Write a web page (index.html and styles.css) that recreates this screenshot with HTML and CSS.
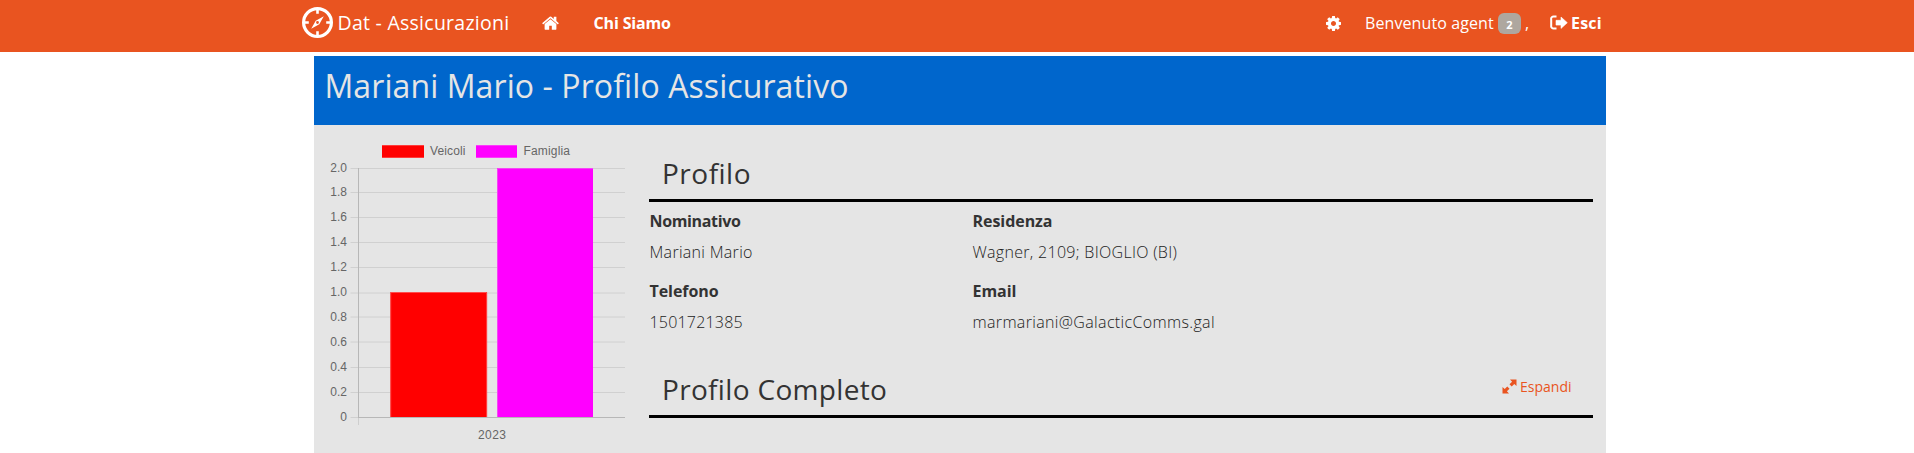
FILE: index.html
```html
<!DOCTYPE html>
<html lang="it">
<head>
<meta charset="utf-8">
<title>Dat - Assicurazioni</title>
<link rel="stylesheet" href="styles.css">
</head>
<body>
<nav class="navbar">
  <div class="nav-inner">
    <svg class="compass" viewBox="0 0 32 32" width="32" height="32">
      <circle cx="15.500" cy="15.500" r="13.900" fill="none" stroke="#fff" stroke-width="3.200"/>
      <path d="M15.500 2v4.800M15.500 24.200V29M2 15.500h4.800M24.200 15.500H29" stroke="#fff" stroke-width="2.600"/>
      <path fill="#fff" fill-rule="evenodd" d="M21.800 9.200 17.300 17.300 9.200 21.800 13.700 13.700ZM15.500 14.100a1.400 1.400 0 1 0 0 2.800 1.400 1.400 0 0 0 0-2.800Z"/>
    </svg>
    <span class="brand">Dat - Assicurazioni</span>
    <svg class="home" viewBox="0 0 1664 1312" width="17" height="14"><path fill="#fff" d="M1408 768v480q0 26-19 45t-45 19H960V928H704v384H320q-26 0-45-19t-19-45V768q0-1 .5-3t.5-3l575-474 575 474q1 2 1 6zm223-69-62 74q-8 9-21 11h-3q-13 0-21-7L832 200 140 777q-12 8-24 7-13-2-21-11l-62-74q-8-10-7-23.500t11-21.500L756 55q32-26 76-26t76 26l244 204V64q0-14 9-23t23-9h192q14 0 23 9t9 23v408l219 182q10 8 11 21.500t-7 23.500z"/></svg>
    <b class="about">Chi Siamo</b>
    <svg class="gear" viewBox="0 0 1536 1536" width="15" height="15"><path fill="#fff" d="M1024 768q0-106-75-181t-181-75-181 75-75 181 75 181 181 75 181-75 75-181zm512-109v222q0 12-8 23t-20 13l-185 28q-19 54-39 91 35 50 107 138 10 12 10 25t-9 23q-27 37-99 108t-94 71q-12 0-26-9l-138-108q-44 23-91 38-16 136-29 186-7 28-36 28H657q-14 0-24.500-8.500T621 1506l-28-184q-49-16-90-37l-141 107q-10 9-25 9-14 0-25-11-126-114-165-168-7-10-7-23 0-12 8-23 15-21 51-66.500t54-70.500q-27-50-41-99L29 913q-13-2-21-12.500T0 877V655q0-12 8-23t19-13l186-28q14-46 39-92-40-57-107-138-10-12-10-24 0-10 9-23 26-36 98.500-107.500T337 135q13 0 26 10l138 107q44-23 91-38 16-136 29-186 7-28 36-28h222q14 0 24.500 8.500T915 30l28 184q49 16 90 37l142-107q9-9 24-9 13 0 25 10 129 119 165 170 7 8 7 22 0 12-8 23-15 21-51 66.500t-54 70.500q26 50 41 98l183 28q13 2 21 12.500t8 23.500z"/></svg>
    <span class="welcome">Benvenuto agent</span>
    <span class="badge">2</span>
    <span class="comma">,</span>
    <svg class="logout" viewBox="0 0 18 16" width="18" height="16"><path d="M6.500 1.500H4.200A2.500 2.500 0 0 0 1.200 4.500v6a2.500 2.500 0 0 0 3 3H6.500" fill="none" stroke="#fff" stroke-width="2"/><path d="M6 5.300h5V2L17.300 7.700 11 13.400V10.100H6Z" fill="#fff" stroke="#fff" stroke-width=".6" stroke-linejoin="round"/></svg>
    <b class="exit">Esci</b>
  </div>
</nav>
<main class="panel">
  <h1 class="panel-title">Mariani Mario - Profilo Assicurativo</h1>
  <div class="panel-body">
    <svg class="chart" viewBox="314 125 335 328" width="335" height="328">
      <rect x="382" y="145" width="42" height="13" fill="#f00"/>
      <path d="M382 145.500h42M382 157.500h42" stroke="#ff3b3b"/>
      <rect x="476" y="145" width="41" height="13" fill="#f0f"/>
      <path d="M476 145.500h41M476 157.500h41" stroke="#fb3bfb"/>
      <path d="M350.500 168.500H625M350.500 192.500H625M350.500 217.500H625M350.500 242.500H625M350.500 267.500H625M350.500 293H625M350.500 317H625M350.500 342H625M350.500 367.500H625M350.500 392.500H625M350.500 417.500H358" stroke="#d0d0d0"/>
      <path d="M358.500 168V417.500M358 417.500H625" stroke="#b7b7b7"/>
      <path d="M358.500 418V425" stroke="#cecece"/>
      <rect x="390.500" y="292" width="96.500" height="125" fill="#f00"/>
      <path d="M390.700 417V292.500H486.700V417" fill="none" stroke="#ff4d4d"/>
      <rect x="497" y="168" width="96" height="249" fill="#f0f"/>
      <path d="M497.500 417V168.500H593" fill="none" stroke="#f545f5"/>
      <g class="chart-text">
        <text x="430" y="155" textLength="35.500">Veicoli</text><text x="523.500" y="155" textLength="46.500">Famiglia</text>
        <g text-anchor="end">
          <text x="347" y="172">2.0</text><text x="347" y="196">1.8</text><text x="347" y="221">1.6</text><text x="347" y="246">1.4</text><text x="347" y="271">1.2</text><text x="347" y="296">1.0</text><text x="347" y="321">0.8</text><text x="347" y="346">0.6</text><text x="347" y="371">0.4</text><text x="347" y="396">0.2</text><text x="347" y="421">0</text>
        </g>
        <text x="492" y="439" text-anchor="middle" textLength="28">2023</text>
      </g>
    </svg>
    <div class="details">
      <div class="section first"><h2 class="h-profile">Profilo</h2></div>
      <dl class="fields">
        <div><dt class="t-nom">Nominativo</dt><dd class="name">Mariani Mario</dd></div>
        <div><dt>Residenza</dt><dd class="address">Wagner, 2109; BIOGLIO (BI)</dd></div>
        <div><dt>Telefono</dt><dd class="phone">1501721385</dd></div>
        <div><dt>Email</dt><dd class="mail">marmariani@GalacticComms.gal</dd></div>
      </dl>
      <div class="section second">
        <h2 class="h-full">Profilo Completo</h2>
        <a class="expand"><svg viewBox="0 0 15 15" width="15" height="15"><path fill="#e95420" d="M8 .5h6.500V7L12.300 4.900 9.700 7.500 7.500 5.300 10.100 2.700ZM7 14.500H.5V8L2.700 10.100 5.300 7.500 7.500 9.700 4.900 12.300Z"/></svg><span>Espandi</span></a>
      </div>
    </div>
  </div>
</main>
</body>
</html>
```

FILE: styles.css
```css
* { box-sizing: border-box; }
body { margin: 0; height: 453px; overflow: hidden; background: #fff; color: #333; font: 16px "Open Sans", "Noto Sans", sans-serif; }
svg { display: block; flex: none; }
.navbar { height: 52px; background: #e95420; color: #fff; }
.nav-inner { display: flex; align-items: flex-start; padding-left: 302px; white-space: nowrap; line-height: 24px; }
.nav-inner > * { flex: none; }
.compass { margin-top: 7px; }
.brand { width: 205px; margin: 11px 0 0 3.5px; font-size: 19.5px; letter-spacing: .26px; }
.home { margin: 16px 35px 0 -1px; }
.about { width: 732px; margin-top: 11px; font-weight: 700; letter-spacing: -.15px; }
.gear { margin-top: 16px; }
.welcome { width: 133px; margin: 11px 0 0 24.5px; letter-spacing: .1px; }
.badge { width: 23px; height: 21px; margin-top: 13px; border-radius: 6px; background: #aea79f; font-size: 11px; font-weight: 700; line-height: 23px; text-align: center; }
.comma { width: 25px; margin: 11px 0 0 4px; }
.logout { margin-top: 15px; }
.exit { margin: 11px 0 0 3px; letter-spacing: .2px; }
.panel { width: 1292px; height: 397px; margin: 4px 0 0 314px; background: #e5e5e5; }
.panel-title { height: 69px; margin: 0; padding-left: 10.5px; background: #06c; color: #e5e5e5; font-size: 32px; font-weight: 400; line-height: 60px; letter-spacing: .09px; }
.panel-body { display: flex; }
.details { width: 944px; }
.section { display: flex; justify-content: space-between; border-bottom: 3px solid #000; padding-left: 13px; }
.section h2 { margin: 0; font-size: 28px; font-weight: 400; line-height: 40px; }
.first { height: 77px; padding-top: 28px; }
.second { height: 75px; padding-top: 26px; }
.section .h-profile { letter-spacing: .5px; }
.section .h-full { letter-spacing: .33px; }
.fields { display: grid; grid-template-columns: 323px 1fr; grid-auto-rows: 70px; height: 141px; margin: 0; padding: 4px 0 0 .5px; }
.fields dt { height: 31px; line-height: 30px; font-weight: 700; letter-spacing: -.05px; }
.fields .t-nom { letter-spacing: -.35px; }
.fields dd { height: 31px; margin: 0; color: #222; line-height: 30px; font-weight: 300; }
.name { letter-spacing: .3px; }
.phone { letter-spacing: .2px; }
.address { letter-spacing: .3px; }
.mail { letter-spacing: .35px; }
.expand { display: flex; gap: 3px; width: 91px; height: 20px; margin-top: 8px; color: #e95420; font-size: 14px; line-height: 20px; }
.expand svg { margin-top: 2px; }
.chart-text { font: 12px "Liberation Sans", Arial, sans-serif; fill: #666; }
```
